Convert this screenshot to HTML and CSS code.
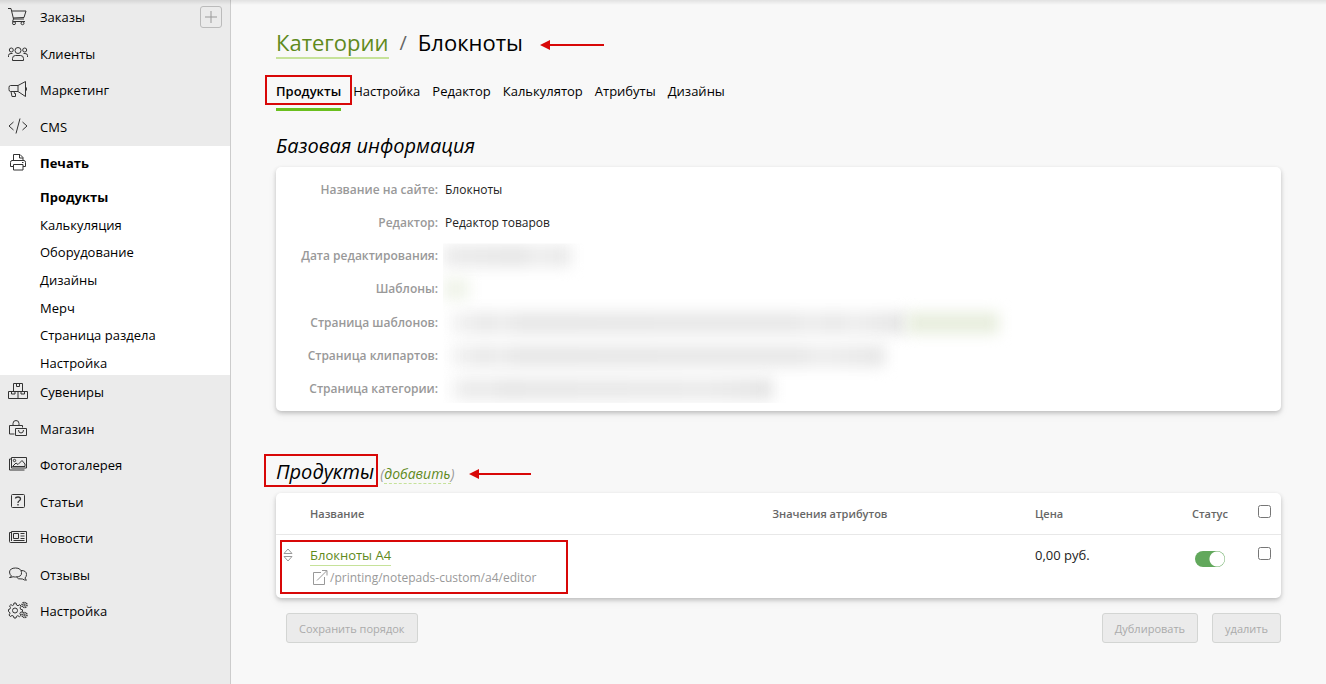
FILE: index.html
```html
<!DOCTYPE html>
<html lang="ru">
<head>
<meta charset="utf-8">
<meta name="viewport" content="width=device-width, initial-scale=1">
<title>Блокноты</title>
<link rel="stylesheet" href="styles.css">
</head>
<body>
<div class="app">
  <nav class="sidebar" aria-label="Главное меню">
    <ul class="menu menu-top">
      <li class="menu-row">
        <a class="menu-link" href="#"><svg class="icon" viewBox="0 0 20 20"><path d="M0 1.500h3l2.500 10.500h10.500M4 4h14l-2 6.500-11 .5M5.500 12l-1 2.500h12.500"/><circle cx="6" cy="16.200" r="1.500"/><circle cx="14.500" cy="16.200" r="1.500"/></svg>Заказы</a>
        <button class="add" type="button" aria-label="Добавить заказ"><svg class="plus" viewBox="0 0 12 12"><path d="M6 0v12M0 6h12"/></svg></button>
      </li>
      <li class="menu-row"><a class="menu-link" href="#"><svg class="icon" viewBox="0 0 20 20"><circle cx="10" cy="6.500" r="3"/><circle cx="3.300" cy="6" r="2"/><circle cx="16.700" cy="6" r="2"/><path d="M4.500 16.500v-2q0-3 3-3h5q3 0 3 3v2zM.5 13v-1.500q0-2 2.500-2h1.500M19.500 13v-1.500q0-2-2.500-2h-1.500"/></svg>Клиенты</a></li>
      <li class="menu-row"><a class="menu-link" href="#"><svg class="icon" viewBox="0 0 20 20"><path d="M10 5.500H2.500q-1.500 0-1.500 2v2q0 2 1.500 2H10zM10 5.500l7.500-4v15l-7.500-5M17.500 7q1 0 1 2t-1 2M3 11.500l1 5h3.500v-3H6.500l-.5-2"/></svg>Маркетинг</a></li>
      <li class="menu-row"><a class="menu-link" href="#"><svg class="icon" viewBox="0 0 20 20"><path d="M5.500 5L1 9l4.500 4M14.500 5l4.500 4-4.500 4M12 1.500L8 16.500"/></svg>CMS</a></li>
    </ul>
    <div class="menu-group">
      <a class="menu-link menu-current" href="#"><svg class="icon" viewBox="0 0 20 20"><path d="M5.500 7.500v-6h6.500l3 3v3M11.500 1.500v3.500H15M5.500 13.500H2.500v-4q0-2 1.500-2h12q1.500 0 1.500 2v4H15M5.500 11.500H15v5.500H5.500zM14 9.500h1.500"/></svg>Печать</a>
      <ul class="submenu">
        <li><a class="sub-current" href="#">Продукты</a></li>
        <li><a href="#">Калькуляция</a></li>
        <li><a href="#">Оборудование</a></li>
        <li><a href="#">Дизайны</a></li>
        <li><a href="#">Мерч</a></li>
        <li><a href="#">Страница раздела</a></li>
        <li><a href="#">Настройка</a></li>
      </ul>
    </div>
    <ul class="menu menu-bottom">
      <li class="menu-row"><a class="menu-link" href="#"><svg class="icon" viewBox="0 0 20 20"><path d="M.5 9.500h19v7H.5zM10 9.500v7M5.500 9.500v-8h9v8M8.500 1.500v3h3v-3M3.500 9.500v2.500H7V9.500M13 9.500v2.500h3.500V9.500"/></svg>Сувениры</a></li>
      <li class="menu-row"><a class="menu-link" href="#"><svg class="icon" viewBox="0 0 20 20"><path d="M6.500 15H1.500V6.500h13v2M5 6.500V4.500q0-3 3-3t3 3v2M7.500 9.500h11v7h-11zM10.500 11q0 3 2.500 3t2.500-3"/></svg>Магазин</a></li>
      <li class="menu-row"><a class="menu-link" href="#"><svg class="icon" viewBox="0 0 20 20"><path d="M3.500 2.500h15v10.500h-15zM3.500 4H1.500v11h15M4.500 11.500l3.500-3.500 2 1.500 4-4 3 3.500v2.500z"/><circle cx="6.500" cy="5.500" r="1.200"/></svg>Фотогалерея</a></li>
      <li class="menu-row"><a class="menu-link" href="#"><svg class="icon" viewBox="0 0 20 20"><rect x="3.500" y="2.500" width="13" height="13" rx="1"/><path stroke-width="1.300" d="M7.500 6.500q0-1.500 2.500-1.500t2.500 2q0 1-1.500 2-1 .5-1 2M10 12v1.500"/></svg>Статьи</a></li>
      <li class="menu-row"><a class="menu-link" href="#"><svg class="icon" viewBox="0 0 20 20"><path d="M3.500 3.500h15v11h-16q-1 0-1-1v-9h2zM3.500 4v9M5.500 5.500h5v5h-5zM12.500 5.500h4M12.500 8h4M12.500 10.500h4M5.500 12.500h11"/></svg>Новости</a></li>
      <li class="menu-row"><a class="menu-link" href="#"><svg class="icon" viewBox="0 0 20 20"><path d="M1.500 12.500q2-.5 2-1.500-2-1.500-2-4Q2 3 7.500 3T13.500 7.500 7.500 12q-1.500 0-2.500-.3-1.500 1-3.500.8zM13 5.500q5.500 0 5.500 4 0 2-1.500 3.500.3 1.500 1.500 2-2 .5-4-1-5 .5-6-2"/></svg>Отзывы</a></li>
      <li class="menu-row"><a class="menu-link" href="#"><svg class="icon" viewBox="0 0 20 20"><path d="M6 2h2l.5 2 1.500.7 1.800-1 1.300 1.500-1 1.600.5 1.500 1.900.5v2l-2 .5-.6 1.300 1 1.800-1.400 1.300-1.700-1-1.300.6L8 17H6l-.5-1.900-1.500-.6-1.700 1L1 14l1-1.700-.6-1.300L.5 10.500v-2l1.400-.4.6-1.500-1-1.700 1.400-1.300 1.700 1 1-.6z"/><circle cx="7" cy="9.500" r="2.500"/><circle cx="16.500" cy="4" r="2.500" stroke-dasharray="1.300 .6" stroke-width="1.500"/><circle cx="16.500" cy="4" r=".8"/><circle cx="16.500" cy="14" r="2.500" stroke-dasharray="1.300 .6" stroke-width="1.500"/><circle cx="16.500" cy="14" r=".8"/></svg>Настройка</a></li>
    </ul>
  </nav>

  <main class="content">
    <h1 class="crumbs"><a class="crumb-link" href="#">Категории</a><span class="slash">/</span><span class="crumb-here">Блокноты</span><svg class="arrow" viewBox="0 0 64 12" aria-hidden="true"><path d="M0 6L10 1v10zM8 5h56v2H8z"/></svg></h1>

    <nav class="tabs" aria-label="Разделы категории">
      <a class="tab tab-current" href="#">Продукты</a>
      <a class="tab" href="#">Настройка</a>
      <a class="tab" href="#">Редактор</a>
      <a class="tab" href="#">Калькулятор</a>
      <a class="tab" href="#">Атрибуты</a>
      <a class="tab" href="#">Дизайны</a>
    </nav>

    <h2 class="section-title">Базовая информация</h2>
    <dl class="card info">
      <dt>Название на сайте:</dt><dd>Блокноты</dd>
      <dt>Редактор:</dt><dd>Редактор товаров</dd>
      <dt>Дата редактирования:</dt><dd class="masked masked-first"><span class="mask mask-date"></span></dd>
      <dt>Шаблоны:</dt><dd class="masked"><span class="mask mask-count"></span></dd>
      <dt>Страница шаблонов:</dt><dd class="masked"><span class="mask mask-long"></span><span class="mask mask-link"></span></dd>
      <dt>Страница клипартов:</dt><dd class="masked"><span class="mask mask-medium"></span></dd>
      <dt>Страница категории:</dt><dd class="masked masked-last"><span class="mask mask-short"></span></dd>
    </dl>

    <div class="section-head">
      <h2 class="section-title framed">Продукты</h2>
      <span class="add-note">(<a class="add-link" href="#">добавить</a>)</span>
      <svg class="arrow arrow-small" viewBox="0 0 62 12" aria-hidden="true"><path d="M0 6L10 1v10zM8 5h54v2H8z"/></svg>
    </div>
    <table class="card products">
      <thead>
        <tr><th class="col-drag"></th><th class="col-name">Название</th><th class="col-attr">Значения атрибутов</th><th class="col-price">Цена</th><th class="col-status">Статус</th><th class="col-check"><input class="check" type="checkbox" aria-label="Выбрать все"></th></tr>
      </thead>
      <tbody>
        <tr>
          <td class="drag"><svg class="sort" viewBox="0 0 10 14"><path d="M5 1l4 4.500H1zM5 13l4-4.500H1z"/></svg></td>
          <td class="name-cell">
            <a class="product" href="#">Блокноты А4</a>
            <a class="path" href="#"><svg class="external" viewBox="0 0 16 16"><path d="M9 2.500H1.500v12h11V7M5 10.500L14.500 1M10 .5h5v5"/></svg>/printing/notepads-custom/a4/editor</a>
          </td>
          <td></td>
          <td>0,00 руб.</td>
          <td class="status"><input class="toggle" type="checkbox" checked aria-label="Статус"></td>
          <td class="pick"><input class="check" type="checkbox" aria-label="Выбрать Блокноты А4"></td>
        </tr>
      </tbody>
    </table>
    <div class="actions">
      <button class="btn btn-save" type="button" disabled>Сохранить порядок</button>
      <button class="btn" type="button" disabled>Дублировать</button>
      <button class="btn" type="button" disabled>удалить</button>
    </div>
  </main>
</div>
</body>
</html>
```
FILE: styles.css
```css
*, *::before { box-sizing: border-box; }
body {
  margin: 0;
  background: #f8f8f8;
  color: #000;
  font: 14px/20px "Open Sans", "Noto Sans", sans-serif;
}
a { color: inherit; text-decoration: none; }
ul { list-style: none; margin: 0; padding: 0; }
svg { fill: none; stroke: currentColor; flex: none; }

.app { display: flex; min-height: 100vh; position: relative; }
.app::before {
  content: "";
  position: absolute;
  inset: 0 0 auto;
  height: 5px;
  background: linear-gradient(rgba(0, 0, 0, .09), transparent);
}

/* Sidebar */
.sidebar {
  flex: none;
  width: 231px;
  background: #ebebeb;
  border-right: 1px solid #ccc;
  font-size: 13px;
}
.menu { display: grid; grid-auto-rows: 1fr; }
.menu-top { min-height: 146px; }
.menu-bottom { min-height: 256px; }
.menu-row { display: flex; align-items: flex-start; justify-content: space-between; padding: 6px 8px 0 0; }
.menu-link { display: flex; align-items: center; gap: 12px; padding-left: 8px; line-height: 22px; }
.icon { width: 20px; height: 20px; color: #333; }
.add {
  width: 22px;
  height: 22px;
  padding: 0;
  display: grid;
  place-items: center;
  border: 1px solid #bbb;
  border-radius: 3px;
  background: none;
  color: #999;
}
.plus { width: 12px; height: 12px; }
.menu-group { background: #fff; padding: 6px 0 0; }
.menu-current { font-weight: 700; }
.submenu {
  display: flex;
  flex-direction: column;
  justify-content: space-between;
  min-height: 190px;
  margin-top: 11px;
  padding-left: 40px;
}
.submenu li { line-height: 24px; }
.sub-current { font-weight: 700; }

/* Main column */
.content { flex: 1; min-width: 0; padding: 27px 45px 0; }
.crumbs { display: flex; align-items: center; margin: 0; font-size: 22px; line-height: 30px; font-weight: 400; }
.crumb-link { color: #5f8a1c; border-bottom: 2px solid #c6e29a; }
.crumb-here { padding-bottom: 2px; }
.slash { margin: 0 11px; color: #666; font-size: 20px; }
.arrow { width: 64px; height: 12px; margin: 4px 0 0 17px; fill: #d80808; stroke: none; }
.arrow-small { width: 62px; margin: 4px 0 0 14px; }

.tabs { display: flex; gap: 12px; margin-top: 17px; font-size: 13px; }
.tab { line-height: 30px; }
.tab-current { position: relative; font-weight: 600; border-bottom: 3px solid #6abf1e; padding-bottom: 2px; }
.tab-current::before, .framed::before {
  content: "";
  position: absolute;
  border: 2px solid #d80808;
  inset: -1px -11px 3px -11px;
}

.section-title { position: relative; margin: 0; font-size: 20px; line-height: 26px; font-style: italic; font-weight: 400; }
.tabs + .section-title { margin-top: 22px; }
.card {
  width: 100%;
  background: #fff;
  border-radius: 5px;
  box-shadow: 0 2px 4px rgba(0, 0, 0, .2), 0 4px 10px rgba(0, 0, 0, .06);
}
.info {
  display: grid;
  grid-template-columns: 162px 1fr;
  grid-auto-rows: 1fr;
  align-items: center;
  column-gap: 5px;
  min-height: 244px;
  margin: 8px 0 0;
  padding: 6px 0 5px;
  font-size: 12px;
}
.info dt { text-align: right; font-weight: 600; color: #999; }
.info dd { margin: 0; padding-left: 2px; color: #222; }
.info .masked { display: flex; padding: 0; align-items: center; align-self: stretch; clip-path: inset(-12px -20px -12px 0); }
.info .masked-first { clip-path: inset(4px -20px -12px 0); }
.info .masked-last { clip-path: inset(-12px -20px 3px 0); }
.mask { height: 22px; filter: blur(7px); background: #e6e6e6; }
.mask-date { width: 128px; background: linear-gradient(90deg, #ececec, #e6e6e6 60%, #eee 72%, #e9e9e9); }
.mask-count { width: 26px; background: #f0f4ea; }
.mask-long { width: 456px; margin-left: 8px; background: linear-gradient(90deg, #f4f4f4, #e8e8e8 8%, #eee 11%, #e7e7e7 15%, #e8e8e8 75%, #eee 79%, #e8e8e8 84%, #eee 88%, #e4e4e4); }
.mask-link { width: 92px; background: #e8eede; }
.mask-medium { width: 434px; margin-left: 8px; background: linear-gradient(90deg, #f4f4f4, #e8e8e8 8%, #eee 11%, #e7e7e7 15%, #e8e8e8 80%, #eee 85%, #e6e6e6); }
.mask-short { width: 322px; margin-left: 8px; background: linear-gradient(90deg, #f4f4f4, #e8e8e8 8%, #eee 11%, #e7e7e7 15%, #ebebeb 80%, #e4e4e4); }

.section-head { display: flex; align-items: center; margin-top: 48px; }
.framed::before { inset: -5px -4px -2px -12px; }
.add-note { margin-left: 6px; padding-top: 2px; font-style: italic; color: #999; line-height: 19px; }
.add-link { color: #5f8a1c; border-bottom: 1px dashed #c6e29a; }

/* Products */
.products { border-collapse: separate; border-spacing: 0; table-layout: fixed; margin-top: 8px; }
.products th { height: 42px; padding: 0; text-align: left; font-size: 11px; font-weight: 600; color: #666; border-bottom: 1px solid #e8e8e8; }
.products td { height: 63px; padding: 9px 0 0; vertical-align: top; font-size: 13px; line-height: 22px; color: #222; }
.col-drag { width: 34px; }
.col-name { width: 46%; }
.products .col-price { width: 157px; }
.products .col-status { width: 54px; }
.col-check { width: 35px; }
.products .drag { padding: 13px 0 0 7px; }
.sort { display: block; width: 10px; height: 14px; color: #999; }
.products .name-cell { position: relative; }
.name-cell::before { content: ""; position: absolute; inset: 5px auto 4px -30px; width: 288px; border: 2px solid #d80808; }
.product { display: inline-block; line-height: 20px; color: #5f8a1c; border-bottom: 1px solid #c6e29a; }
.path { display: flex; align-items: center; gap: 2px; padding-left: 2px; font-size: 12px; line-height: 24px; color: #999; }
.external { width: 16px; height: 16px; }
.check { display: block; width: 13px; height: 13px; margin: 0 0 0 12px; }
.products .col-check { padding-bottom: 4px; }
.products .pick { padding-top: 12px; }
.products .status { padding: 16px 0 0 3px; }
.toggle {
  appearance: none;
  display: block;
  width: 30px;
  height: 16px;
  margin: 0;
  border-radius: 8px;
  background: radial-gradient(circle at 22px 8px, #fff 7px, #62a85c 8px);
}

.actions { display: flex; gap: 14px; margin-top: 15px; padding-left: 10px; }
.btn {
  height: 30px;
  padding: 1px 12px 0;
  border: 1px solid #d3d5d3;
  border-radius: 3px;
  background: #ebebeb;
  color: #aaa;
  font: 11px/20px "Open Sans", "Noto Sans", sans-serif;
}
.btn-save { margin-right: auto; }
```
